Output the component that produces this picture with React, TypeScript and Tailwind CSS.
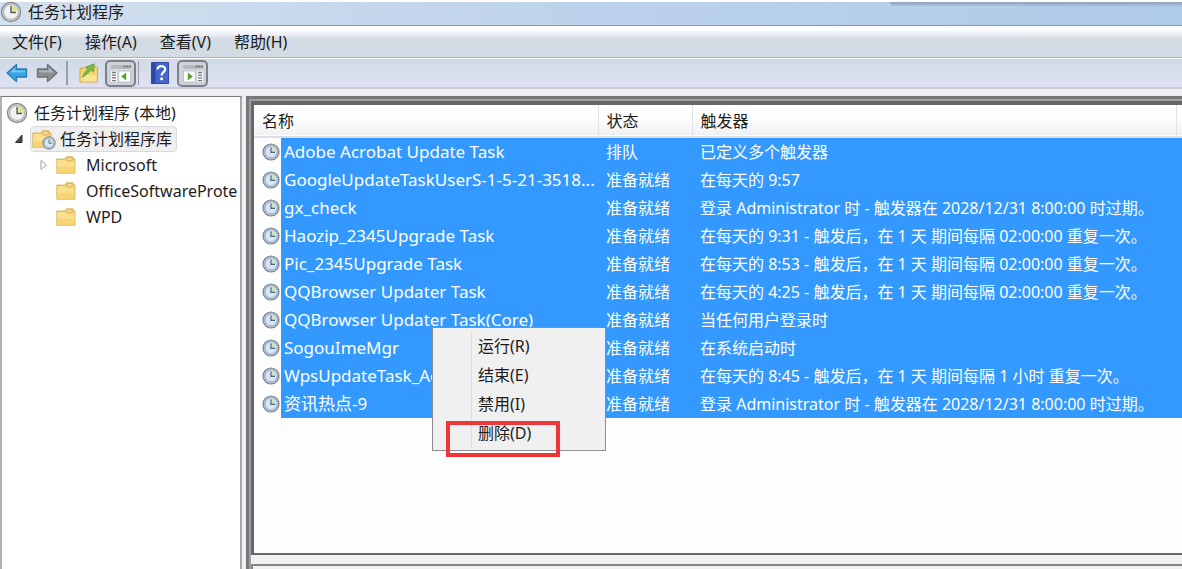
import type { ReactNode } from 'react';

type Task = { name: string; status: string; trigger: string };

const tasks: Task[] = [
  { name: 'Adobe Acrobat Update Task', status: '排队', trigger: '已定义多个触发器' },
  { name: 'GoogleUpdateTaskUserS-1-5-21-3518...', status: '准备就绪', trigger: '在每天的 9:57' },
  { name: 'gx_check', status: '准备就绪', trigger: '登录 Administrator 时 - 触发器在 2028/12/31 8:00:00 时过期。' },
  { name: 'Haozip_2345Upgrade Task', status: '准备就绪', trigger: '在每天的 9:31 - 触发后，在 1 天 期间每隔 02:00:00 重复一次。' },
  { name: 'Pic_2345Upgrade Task', status: '准备就绪', trigger: '在每天的 8:53 - 触发后，在 1 天 期间每隔 02:00:00 重复一次。' },
  { name: 'QQBrowser Updater Task', status: '准备就绪', trigger: '在每天的 4:25 - 触发后，在 1 天 期间每隔 02:00:00 重复一次。' },
  { name: 'QQBrowser Updater Task(Core)', status: '准备就绪', trigger: '当任何用户登录时' },
  { name: 'SogouImeMgr', status: '准备就绪', trigger: '在系统启动时' },
  { name: 'WpsUpdateTask_Ac', status: '准备就绪', trigger: '在每天的 8:45 - 触发后，在 1 天 期间每隔 1 小时 重复一次。' },
  { name: '资讯热点-9', status: '准备就绪', trigger: '登录 Administrator 时 - 触发器在 2028/12/31 8:00:00 时过期。' },
];

const menus = ['文件(F)', '操作(A)', '查看(V)', '帮助(H)'];
const actions = ['运行(R)', '结束(E)', '禁用(I)', '删除(D)'];

function Clock({ className }: { className: string }) {
  return (
    <svg viewBox="0 0 22 22" className={className} aria-hidden="true">
      <circle cx="11" cy="11" r="9.6" fill="#cdcfd1" stroke="#85888c" strokeWidth="1.2" />
      <circle cx="11" cy="11" r="7.4" fill="#f1f3f4" stroke="#a0a3a7" strokeWidth="0.8" />
      <path d="M11 11V3.8A7.2 7.2 0 0 1 18.2 11Z" fill="#dfe59a" />
      <path d="M11 5v6.5h5" fill="none" stroke="#565e66" strokeWidth="1.4" />
    </svg>
  );
}

function TaskClock({ className }: { className: string }) {
  return (
    <svg viewBox="0 0 18 18" className={className} aria-hidden="true">
      <circle cx="9" cy="9" r="8" fill="#b3c1cd" stroke="#78858f" strokeWidth="1.2" />
      <circle cx="9" cy="9" r="6" fill="#d6e6f7" stroke="#93a6b7" strokeWidth="0.8" />
      <path d="M9 9V3.2A5.8 5.8 0 0 1 14.8 9Z" fill="#d0e2cc" />
      <path d="M9 4.5V9.3h4" fill="none" stroke="#4b6980" strokeWidth="1.2" />
    </svg>
  );
}

function Folder({ className }: { className: string }) {
  return (
    <svg viewBox="0 0 20 18" className={className} aria-hidden="true">
      <path d="M.8 3H9.2L10.4.8h6.4L18 3h1v14.2H.8Z" fill="#f0cc6a" stroke="#d2ab52" strokeWidth="0.8" />
      <path d="M1.3 4h8.2l1.4 2h6.2l1.2-1.5v12H1.3Z" fill="#fbdf8d" />
      <path d="M1.3 11h17v5.6h-17Z" fill="#f6d06a" opacity=".7" />
      <path d="M11.2 2h4.8v2h-4.8Z" fill="#fff3cd" stroke="#cfa74d" strokeWidth="0.6" />
    </svg>
  );
}

function Arrow({ fill, stroke, className }: { fill: string; stroke: string; className: string }) {
  return (
    <svg viewBox="0 0 22 20" className={className} aria-hidden="true">
      <path d="M1 10 10.5 1.5V6H20.5v8H10.5v4.5Z" fill={fill} stroke={stroke} strokeWidth="1.3" strokeLinejoin="round" />
      <path d="M4 9.4 9.3 4.6V7.4h9.8v1.8Z" fill="#fff" opacity=".35" />
    </svg>
  );
}

function FolderUp() {
  return (
    <svg viewBox="0 0 20 20" className="h-5 w-5" aria-hidden="true">
      <path d="M1 5h8l1.5-1.5H17L18.5 5v14H1Z" fill="#f4d36d" stroke="#cda440" strokeWidth="0.9" />
      <path d="M1.8 12h16v6.4h-16Z" fill="#fbe393" />
      <path d="M3 14.2C5 10.5 7 7.6 9.2 5.8L6.8 4 15.2.8 14.6 9l-2.2-1.8C9.5 9.3 7 12.4 3 14.2Z" fill="#76bd45" stroke="#54962f" strokeWidth="0.7" />
    </svg>
  );
}

function PaneIcon({ mirrored }: { mirrored?: boolean }) {
  return (
    <svg viewBox="0 0 22 20" className="h-5 w-[22px]" aria-hidden="true">
      <path d="M1 2h20v4H1Z" fill="#b4b7bc" />
      <path d="M13.6 3.5h1.8M16.4 3.5h1.8M19.2 3.5H21" stroke="#63666c" strokeWidth="1.3" />
      <path d="M1 6h20v1.6H1Z" fill="#d9dbde" />
      {mirrored ? (
        <>
          <path d="M1.5 8h11.8v11H1.5Z" fill="#fdfefd" stroke="#b4b7bb" strokeWidth="0.8" />
          <path d="M15 8h6v11h-6Z" fill="#f4f5f7" />
          <path d="M16 9.5h4M16 12.2h4M16 14.9h4M16 17.6h4" stroke="#777b82" strokeWidth="1.3" />
          <path d="M5.8 9.4v8.2l5-4.1Z" fill="#57a52f" />
        </>
      ) : (
        <>
          <path d="M8.7 8h11.8v11H8.7Z" fill="#fdfefd" stroke="#b4b7bb" strokeWidth="0.8" />
          <path d="M1 8h6v11H1Z" fill="#f4f5f7" />
          <path d="M2 9.5h4M2 12.2h4M2 14.9h4M2 17.6h4" stroke="#777b82" strokeWidth="1.3" />
          <path d="M16.2 9.4v8.2l-5-4.1Z" fill="#57a52f" />
        </>
      )}
    </svg>
  );
}

function Help() {
  return (
    <svg viewBox="0 0 18 22" className="h-[22px] w-[18px]" aria-hidden="true">
      <path d="M.5.5h17v21H.5Z" fill="#4566cc" stroke="#324a9c" />
      <path d="M1 1h3.5v20H1Z" fill="#2b4aa8" />
      <path d="M6.6 7.4c0-4.4 7.6-4.4 7.6-.2 0 3-3.6 3-3.6 6.2" fill="none" stroke="#fff" strokeWidth="2.2" />
      <path d="M9.3 15.6h2.6v2.6H9.3Z" fill="#fff" />
    </svg>
  );
}

function ToolButton({ label, pressed, children }: { label: string; pressed?: boolean; children: ReactNode }) {
  return (
    <button
      type="button"
      aria-label={label}
      className={
        pressed
          ? 'flex h-[27px] w-[31px] items-center justify-center rounded-[5px] border-2 border-[#7b7f88] bg-[#cfd2d9]'
          : 'flex h-7 items-center justify-center'
      }
    >
      {children}
    </button>
  );
}

function TreeItem({ icon, label, className }: { icon: ReactNode; label: string; className: string }) {
  return (
    <li className={`flex h-[26px] items-center whitespace-nowrap ${className}`}>
      {icon}
      {label}
    </li>
  );
}

export default function App() {
  return (
    <div className="flex h-screen flex-col overflow-hidden bg-[#f0f0f2] font-['Noto_Sans','Noto_Sans_CJK_SC',sans-serif] text-base leading-none text-[#1c1c1c]">
      <header className="relative flex h-[26px] shrink-0 items-center gap-1.5 border-t-2 border-b border-t-white border-b-[#8f99aa] bg-linear-to-r from-[#d3e0ee] via-[#bdd2ea] to-[#aecbe8] pb-1">
        <Clock className="h-[22px] w-[22px] shrink-0" />
        <h1>任务计划程序</h1>
        <span className="absolute top-0 right-0 h-1 w-[292px] rounded-bl-full bg-linear-to-b from-[#93a2b8] to-[#a9bfda]" />
      </header>

      <nav className="flex h-8 shrink-0 items-center gap-[23px] border-b border-[#a9b2c3] bg-linear-to-b from-white from-10% via-[#e8ebf2] via-30% to-[#d3dce5] to-40% px-3">
        {menus.map((m) => (
          <button key={m} type="button" className="whitespace-nowrap">
            {m}
          </button>
        ))}
      </nav>

      <div className="flex h-[31px] shrink-0 items-center border-t border-b-2 border-t-white border-b-[#c9cdd4] bg-linear-to-b from-[#d0dae7] to-[#dfe1f1] pl-1.5">
        <ToolButton label="后退">
          <Arrow fill="#35a5e6" stroke="#2b7bb0" className="h-5 w-[22px]" />
        </ToolButton>
        <span className="w-2" />
        <ToolButton label="前进">
          <Arrow fill="#8b8e92" stroke="#6d7074" className="h-5 w-[22px] -scale-x-100" />
        </ToolButton>
        <span className="mx-2 h-6 w-0.5 bg-[#9a9ea8]" />
        <span className="w-[3px]" />
        <ToolButton label="上一级">
          <FolderUp />
        </ToolButton>
        <span className="w-1.5" />
        <ToolButton label="显示控制台树" pressed>
          <PaneIcon />
        </ToolButton>
        <span className="ml-[2px] h-6 w-px bg-[#9a9ea8]" />
        <span className="w-3" />
        <ToolButton label="帮助">
          <Help />
        </ToolButton>
        <span className="w-2" />
        <ToolButton label="显示操作窗格" pressed>
          <PaneIcon mirrored />
        </ToolButton>
      </div>

      <div className="mt-[7px] flex min-h-0 flex-1">
        <aside className="w-[242px] shrink-0 overflow-hidden border-t border-r-2 border-l-2 border-t-[#77797d] border-r-[#a5a7aa] border-l-[#b0b2b5] bg-white pt-[3px]">
          <ul>
            <TreeItem label="任务计划程序 (本地)" className="gap-1.5 pl-1" icon={<Clock className="h-[22px] w-[22px] shrink-0" />} />
            <li className="flex h-[26px] items-center pl-3">
              <svg viewBox="0 0 10 10" className="h-2.5 w-2.5 shrink-0" aria-hidden="true">
                <path d="M8 1v7.5H1.5Z" fill="#4a4a4a" stroke="#2c2c2c" />
              </svg>
              <span className="ml-1.5 flex h-[26px] items-center gap-2 rounded border border-[#d9d9dc] bg-[#efeff0] pr-1 pl-px whitespace-nowrap">
                <span className="relative">
                  <Folder className="h-[18px] w-5" />
                  <TaskClock className="absolute top-1.5 left-2.5 h-3.5 w-3.5" />
                </span>
                任务计划程序库
              </span>
            </li>
            <TreeItem
              label="Microsoft"
              className="pl-[38px]"
              icon={
                <>
                  <svg viewBox="0 0 8 12" className="mr-2 h-3 w-2" aria-hidden="true">
                    <path d="M1 1.5v9L6.5 6Z" fill="#fff" stroke="#a2a2a2" />
                  </svg>
                  <Folder className="mr-2.5 h-[18px] w-5 shrink-0" />
                </>
              }
            />
            <TreeItem label="OfficeSoftwareProte" className="gap-2.5 pl-[54px]" icon={<Folder className="h-[18px] w-5 shrink-0" />} />
            <TreeItem label="WPD" className="gap-2.5 pl-[54px]" icon={<Folder className="h-[18px] w-5 shrink-0" />} />
          </ul>
        </aside>

        <main className="relative ml-1 flex min-w-0 flex-1 flex-col border-t-[3px] border-l-[3px] border-[#77777a]">
          <div className="flex min-h-0 flex-1 flex-col border-t-2 border-l-2 border-[#a0a0a3]">
            <section className="min-h-0 flex-1 overflow-hidden border-t-4 border-b-2 border-l-[3px] border-[#67676a] bg-[#fdfdfe]">
              <table className="w-full table-fixed border-collapse text-left">
                <colgroup>
                  <col className="w-[344px]" />
                  <col className="w-[94px]" />
                  <col />
                  <col className="w-1.5" />
                </colgroup>
                <thead>
                  <tr className="h-8 border-b-2 border-[#d8dfe6] bg-linear-to-b from-white from-40% to-[#f0f1f3]">
                    <th className="border-r border-[#e0e2e5] p-0 pl-2 font-normal">名称</th>
                    <th className="border-r border-[#e0e2e5] p-0 pl-2 font-normal">状态</th>
                    <th className="border-r border-[#e0e2e5] p-0 pl-2 font-normal">触发器</th>
                    <th className="p-0" />
                  </tr>
                </thead>
                <tbody className="text-white">
                  {tasks.map((t) => (
                    <tr key={t.name} className="h-7">
                      <td className="p-0">
                        <div className="flex items-center pl-2">
                          <TaskClock className="h-[18px] w-[18px] shrink-0" />
                          <span className="ml-px h-7 min-w-0 flex-1 overflow-hidden bg-[#3399ff] pl-[3px] text-[17px] leading-7 whitespace-nowrap">{t.name}</span>
                        </div>
                      </td>
                      <td className="bg-[#3399ff] p-0 pl-2 whitespace-nowrap">{t.status}</td>
                      <td className="bg-[#3399ff] p-0 pl-2 whitespace-nowrap">{t.trigger}</td>
                      <td className="bg-[#3399ff] p-0" />
                    </tr>
                  ))}
                </tbody>
              </table>
            </section>
            <div className="h-[9px] shrink-0 bg-[#f0f0f2]" />
            <div className="h-[5px] shrink-0 border-t-2 border-l-2 border-[#858588] bg-[#f0f0f2]" />
          </div>

          <div role="menu" className="absolute top-[228px] left-[183px] w-[174px] border border-[#8e8e90] bg-[#f1f0f1] py-[3px] pl-[38px] text-[#1c1c1c]">
            {actions.map((a) => (
              <button key={a} type="button" role="menuitem" className="block h-[29px] w-full border-l border-[#dedee0] pl-1.5 text-left whitespace-nowrap">
                {a}
              </button>
            ))}
            <span className="absolute top-[93px] left-[13px] h-9 w-[114px] border-4 border-[#ee3538]" />
          </div>
        </main>
      </div>
    </div>
  );
}
